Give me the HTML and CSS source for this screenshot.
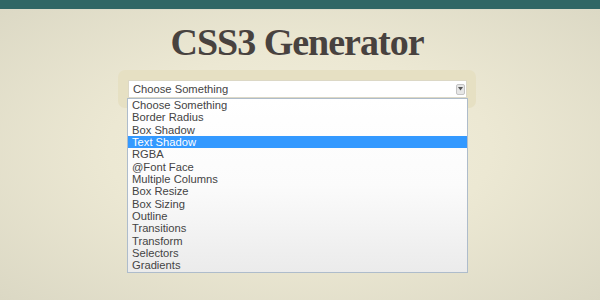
FILE: index.html
```html
<!DOCTYPE html>
<html lang="en">
<head>
  <meta charset="UTF-8" />
  <title>CSS3 Generator</title>
  <link rel="stylesheet" href="styles.css">
</head>
<body>
  <div class="top-bar"></div>

  <div class="page">
    <h1>CSS3 Generator</h1>

    <div class="panel">
      <div class="select">
        <span class="select-text">Choose Something</span>
        <span class="select-arrow">
          <svg width="5" height="4" viewBox="0 0 5 4"><path d="M0 0h5L2.5 3.5z" fill="#555"/></svg>
        </span>
      </div>

      <ul class="options">
        <li>Choose Something</li>
        <li>Border Radius</li>
        <li>Box Shadow</li>
        <li class="active">Text Shadow</li>
        <li>RGBA</li>
        <li>@Font Face</li>
        <li>Multiple Columns</li>
        <li>Box Resize</li>
        <li>Box Sizing</li>
        <li>Outline</li>
        <li>Transitions</li>
        <li>Transform</li>
        <li>Selectors</li>
        <li>Gradients</li>
      </ul>
    </div>
  </div>
</body>
</html>
```

FILE: styles.css
```css
* { margin: 0; padding: 0; box-sizing: border-box; }

html, body { height: 100%; }

body {
  font-family: 'Liberation Sans', Arial, sans-serif;
  background: radial-gradient(ellipse at 50% 50%, #f2efdc 0%, #ece8d3 45%, #dbd8c4 100%);
  overflow: hidden;
}

.top-bar {
  height: 10px;
  background: #2f6665;
  border-bottom: 1px solid #dcdac8;
}

.page {
  display: flex;
  flex-direction: column;
  align-items: center;
  padding-right: 6px;
}

h1 {
  font-family: 'Liberation Serif', 'Times New Roman', serif;
  font-size: 38px;
  font-weight: bold;
  letter-spacing: -1px;
  color: #48423f;
  line-height: 40px;
  margin-top: 12px;
  margin-bottom: 8px;
}

.panel {
  position: relative;
  width: 358px;
  padding: 10px 9px 10px 10px;
  background: #e6e0c3;
  border-radius: 7px;
}

.select {
  height: 18px;
  display: flex;
  align-items: center;
  justify-content: space-between;
  padding: 0 1px 0 4px;
  background: #fff;
  border: 1px solid #dcd8c6;
  font-size: 11.2px;
  color: #444;
}

.select-arrow {
  width: 9px;
  height: 11px;
  display: flex;
  align-items: center;
  justify-content: center;
  background: #e6e6e6;
  border: 1px solid #c4c4c4;
  border-radius: 2px;
}

.options {
  position: absolute;
  left: 9px;
  top: 28px;
  width: 341px;
  list-style: none;
  background: linear-gradient(to bottom, #ffffff 0%, #fbfbfb 50%, #ebebeb 100%);
  border: 1px solid #aebccb;
}

.options li {
  height: 12.35px;
  line-height: 12.35px;
  padding-left: 4px;
  font-size: 11.2px;
  color: #444;
  white-space: nowrap;
}

.options li.active {
  background: #3399ff;
  color: #fff;
}
```
